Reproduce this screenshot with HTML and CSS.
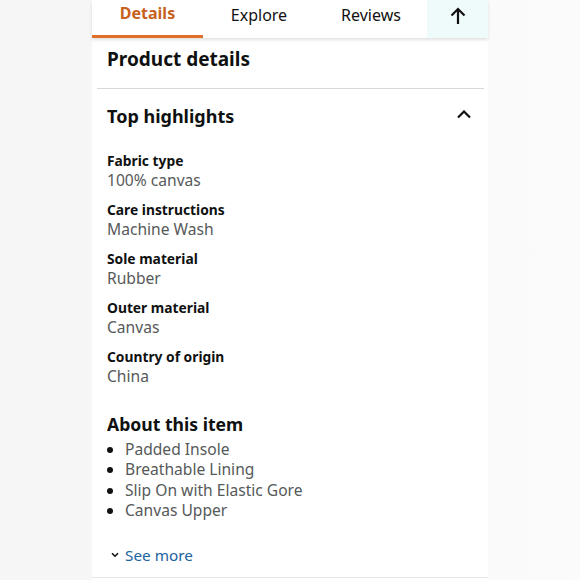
FILE: index.html
```html
<!DOCTYPE html>
<html>
<head>
<meta charset="utf-8">
<link rel="stylesheet" href="styles.css">
</head>
<body>
<div class="page">
  <div class="column">
    <nav class="tabs">
      <div class="tab active">Details</div>
      <div class="tab">Explore</div>
      <div class="tab">Reviews</div>
      <div class="tab up">
        <svg width="18" height="20" viewBox="0 0 18 20"><path d="M9 18V3M2.5 9.5L9 3l6.5 6.5" fill="none" stroke="#111" stroke-width="2.2"/></svg>
      </div>
    </nav>
    <h1 class="title">Product details</h1>
    <div class="divider"></div>
    <div class="section-head">
      <h2>Top highlights</h2>
      <svg class="chev" width="16" height="10" viewBox="0 0 16 10"><path d="M2 8.5L8 2.5l6 6" fill="none" stroke="#111" stroke-width="2.2"/></svg>
    </div>
    <dl class="specs">
      <div class="spec"><dt>Fabric type</dt><dd>100% canvas</dd></div>
      <div class="spec"><dt>Care instructions</dt><dd>Machine Wash</dd></div>
      <div class="spec"><dt>Sole material</dt><dd>Rubber</dd></div>
      <div class="spec"><dt>Outer material</dt><dd>Canvas</dd></div>
      <div class="spec"><dt>Country of origin</dt><dd>China</dd></div>
    </dl>
    <h2 class="about">About this item</h2>
    <ul class="bullets">
      <li>Padded Insole</li>
      <li>Breathable Lining</li>
      <li>Slip On with Elastic Gore</li>
      <li>Canvas Upper</li>
    </ul>
    <div class="see-more">
      <svg width="8" height="6" viewBox="0 0 8 6"><path d="M1 1.2L4 4.2l3-3" fill="none" stroke="#111" stroke-width="1.6"/></svg>
      <span>See more</span>
    </div>
    <div class="bottom-line"></div>
  </div>
</div>
</body>
</html>
```
FILE: styles.css
```css
html, body {
  margin: 0;
  padding: 0;
}
body {
  background: linear-gradient(90deg, #f6f6f6 0, #f6f6f6 92px, #fafafa 488px, #fbfbfb 100%);
  font-family: "Noto Sans", "Open Sans", sans-serif;
  color: #0f1111;
  height: 580px;
  overflow: hidden;
}
.page {
  padding-left: 92px;
}
.column {
  width: 396px;
  background: #fff;
  height: 580px;
}
.tabs {
  display: grid;
  grid-template-columns: 111px 112px 112px 61px;
  height: 38px;
  box-shadow: 0 2px 3px rgba(0,0,0,0.12);
  position: relative;
}
.tab {
  display: flex;
  align-items: center;
  justify-content: center;
  font-size: 16px;
  color: #111;
  padding-bottom: 8px;
  box-sizing: border-box;
}
.tab.active {
  color: #c7611e;
  font-weight: 700;
  border-bottom: 3px solid #e06f2a;
  padding-bottom: 9px;
}
.tab.up {
  background: #effafa;
  padding-bottom: 6px;
}
.title {
  margin: 8px 0 0 15px;
  font-size: 19px;
  font-weight: 700;
  line-height: 26px;
}
.divider {
  margin: 16px 4px 0 5px;
  border-top: 1px solid #d5d9d9;
}
.section-head {
  display: flex;
  justify-content: space-between;
  align-items: center;
  padding: 14px 15px 0 15px;
}
.section-head h2, .about {
  margin: 0;
  font-size: 18px;
  font-weight: 700;
  line-height: 26px;
}
.chev {
  margin-right: 1px;
  margin-top: -4px;
}
.specs {
  margin: 22px 0 0 15px;
  display: flex;
  flex-direction: column;
  gap: 9px;
}
.spec dt {
  font-size: 13.8px;
  font-weight: 700;
  line-height: 19px;
}
.spec dd {
  margin: 0;
  font-size: 15.6px;
  line-height: 21px;
  color: #565959;
}
.about {
  margin: 24px 0 0 15px;
  font-size: 17.6px;
}
.bullets {
  margin: 2px 0 0 0;
  padding-left: 33px;
  font-size: 15.6px;
  line-height: 20.4px;
  color: #565959;
}
.bullets li::marker {
  color: #111;
}
.see-more {
  display: flex;
  align-items: center;
  gap: 6px;
  margin: 24px 0 0 19px;
  font-size: 15.3px;
  color: #2162a1;
  line-height: 21px;
}
.bottom-line {
  margin-top: 11px;
  border-top: 1px solid #e3e6e6;
}
```
